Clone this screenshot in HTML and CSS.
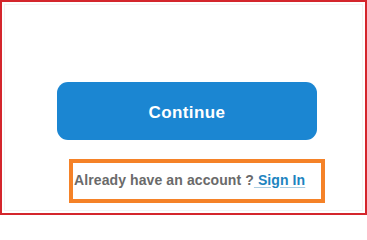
FILE: index.html
```html
<!DOCTYPE html>
<html>
<head>
<meta charset="utf-8">
<link rel="stylesheet" href="styles.css">
</head>
<body>
<div class="frame">
  <div class="inner">
    <div class="actions">
      <button class="continue">Continue</button>
      <div class="signin-box">
        <span class="prompt">Already have an account ?</span><a class="link" href="#">&nbsp;Sign In</a>
      </div>
    </div>
  </div>
</div>
</body>
</html>
```
FILE: styles.css
```css
html, body {
  margin: 0;
  padding: 0;
  background: #ffffff;
}
.frame {
  width: 367px;
  height: 215px;
  box-sizing: border-box;
  border: 2px solid #d4262c;
  padding: 2px;
}
.inner {
  height: 100%;
  box-sizing: border-box;
  border: 1px solid #f3f3f3;
}
.actions {
  display: flex;
  flex-direction: column;
  align-items: flex-start;
  width: 260px;
  margin-left: 52px;
  padding-top: 77px;
}
.continue {
  width: 260px;
  height: 58px;
  border: none;
  border-radius: 11px;
  background: #1b86d2;
  color: #ffffff;
  font-family: "Liberation Sans", Arial, sans-serif;
  font-weight: bold;
  font-size: 17px;
  letter-spacing: 0.4px;
  padding: 4px 0 0 0;
}
.signin-box {
  margin-top: 19px;
  margin-left: 12px;
  width: 256px;
  height: 44px;
  box-sizing: border-box;
  border: 4px solid #f58228;
  display: flex;
  align-items: center;
  padding-left: 1px;
  padding-bottom: 3px;
  font-family: "Liberation Sans", Arial, sans-serif;
  font-weight: bold;
  font-size: 14px;
  letter-spacing: 0.1px;
  white-space: nowrap;
}
.prompt {
  color: #6a6a6a;
}
.link {
  color: #1d84bf;
  text-decoration: underline;
  text-decoration-color: #a9cbe0;
  text-underline-offset: 2px;
}
```
